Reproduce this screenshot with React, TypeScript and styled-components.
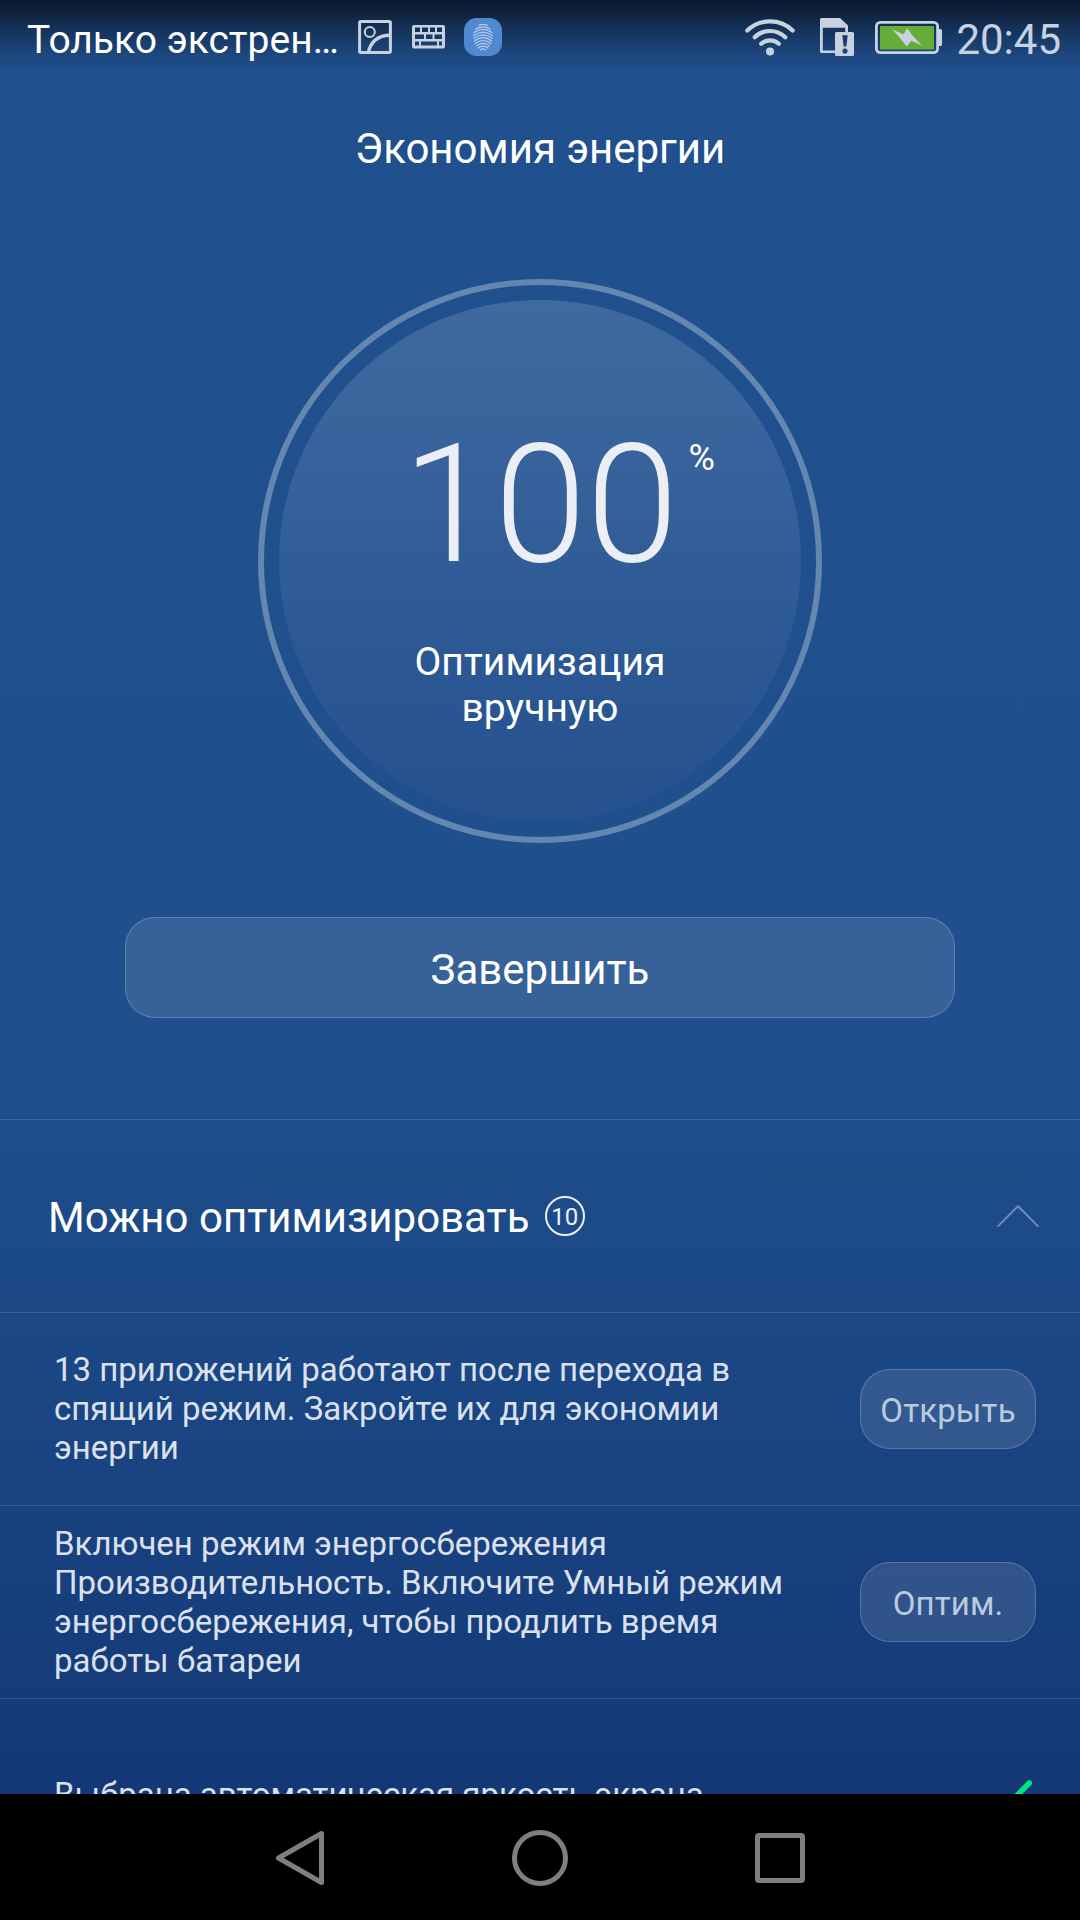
import React from 'react';
import styled, { createGlobalStyle } from 'styled-components';

const GlobalStyle = createGlobalStyle`
  * { box-sizing: border-box; }
  body { margin: 0; background: #000; }
  button { font: inherit; color: inherit; margin: 0; padding: 0; }
`;

const Screen = styled.div`
  width: 1080px;
  height: 1920px;
  display: flex;
  flex-direction: column;
  overflow: hidden;
  font-family: Roboto, 'Noto Sans', sans-serif;
  color: #fff;
`;

const Content = styled.main`
  height: 1794px;
  flex: none;
  display: flex;
  flex-direction: column;
  overflow: hidden;
  background:
    linear-gradient(180deg, rgba(10, 22, 40, 0.92) 0, rgba(10, 22, 40, 0.84) 10px, rgba(10, 22, 40, 0.5) 30px, rgba(10, 22, 40, 0.16) 54px, rgba(10, 22, 40, 0) 74px),
    linear-gradient(180deg, #20508e 0, #1f508d 1000px, #1e4e8b 1119px, #1c4886 1312px, #18407e 1560px, #143876 1794px);
`;

const StatusBar = styled.header`
  height: 75px;
  flex: none;
  display: flex;
  align-items: flex-start;
  padding: 0 19px 0 27px;
`;

const Carrier = styled.span`
  width: 331px;
  padding-top: 17px;
  font-size: 39px;
  line-height: 46px;
  white-space: nowrap;
`;

const StatusIcons = styled.div<{ $gap: number }>`
  display: flex;
  align-items: center;
  height: 74px;
  gap: ${(p) => p.$gap}px;
`;

const Spacer = styled.div`
  flex: 1;
`;

const Clock = styled.time`
  width: 105px;
  margin-left: 14px;
  padding-top: 16px;
  font-size: 42px;
  line-height: 48px;
  text-align: right;
  color: #c7d2e2;
  white-space: nowrap;
`;

const Title = styled.h1`
  margin: 49px 0 0;
  height: 50px;
  flex: none;
  font-size: 42px;
  font-weight: 400;
  line-height: 50px;
  text-align: center;
`;

const Ring = styled.section`
  width: 564px;
  height: 564px;
  flex: none;
  align-self: center;
  margin-top: 105px;
  padding: 15px;
  border: 6px solid rgba(255, 255, 255, 0.31);
  border-radius: 50%;
`;

const Disc = styled.div`
  width: 522px;
  height: 522px;
  display: flex;
  flex-direction: column;
  align-items: center;
  padding-top: 107px;
  border-radius: 50%;
  background: linear-gradient(180deg, #40699f 0%, #345f99 42%, #2d5a95 60%, #25528f 100%);
`;

const Reading = styled.div`
  height: 195px;
  display: flex;
  align-items: flex-start;
  padding-left: 37px;
`;

const Percent = styled.span`
  font-size: 166px;
  font-weight: 300;
  line-height: 195px;
  color: rgba(255, 255, 255, 0.9);
`;

const Unit = styled.sup`
  margin: 29px 0 0 10px;
  font-size: 36px;
  line-height: 44px;
`;

const Mode = styled.p`
  width: 320px;
  margin: 37px 0 0;
  font-size: 39px;
  line-height: 46px;
  letter-spacing: 0.1px;
  text-align: center;
`;

const FinishButton = styled.button`
  width: 830px;
  height: 101px;
  flex: none;
  align-self: center;
  margin: 74px 0 101px;
  padding-top: 3px;
  border: 1px solid rgba(255, 255, 255, 0.2);
  border-radius: 30px;
  background: rgba(247, 240, 255, 0.11);
  font-size: 42px;
`;

const Section = styled.section`
  display: flex;
  flex-direction: column;
`;

const SectionHeader = styled.div`
  height: 193px;
  flex: none;
  display: flex;
  align-items: center;
  padding: 0 40px 0 48px;
  border-top: 1px solid rgba(255, 255, 255, 0.14);
`;

const SectionTitle = styled.h2`
  margin: 3px 0 0;
  font-size: 42px;
  font-weight: 400;
`;

const Count = styled.span`
  width: 40px;
  height: 40px;
  display: flex;
  align-items: center;
  justify-content: center;
  margin-left: 15px;
  padding-top: 1px;
  border: 2px solid #e9eef5;
  border-radius: 50%;
  font-size: 24px;
  color: #eef2f8;
`;

const Row = styled.div`
  height: 193px;
  flex: none;
  display: flex;
  align-items: center;
  padding: 0 44px 0 54px;
  border-top: 1px solid rgba(255, 255, 255, 0.14);
`;

const RowText = styled.p`
  width: 750px;
  margin: -1px 0 0;
  font-size: 33px;
  line-height: 39px;
  white-space: pre-line;
  color: #dbe1ec;
`;

const RowButton = styled.button`
  width: 176px;
  height: 80px;
  flex: none;
  border: 1px solid rgba(255, 255, 255, 0.2);
  border-radius: 30px;
  background: rgba(255, 250, 255, 0.11);
  font-size: 33px;
  letter-spacing: 0.15px;
  padding-top: 3px;
  color: #bccadd;
`;

const NavBar = styled.nav`
  height: 126px;
  flex: none;
  display: flex;
  align-items: center;
  justify-content: center;
  gap: 180px;
  background: #000;
`;

const NavButton = styled.button`
  width: 60px;
  height: 60px;
  border: 0;
  background: none;
  svg { display: block; }
`;

const ICON = '#c7d1df';

const PictureIcon = () => (
  <svg width="34" height="34" viewBox="0 0 34 34" fill="none" stroke={ICON}>
    <rect x="1.6" y="1.6" width="30.8" height="30.8" rx="1.2" strokeWidth="3" />
    <circle cx="11.8" cy="12" r="5" strokeWidth="2" />
    <path d="M10.5 32C12.5 22 20 15.2 32 15.2" strokeWidth="3.4" />
  </svg>
);

const KeyboardIcon = () => (
  <svg width="34" height="24" viewBox="-1 0 34 24">
    <path
      fill={ICON}
      fillRule="evenodd"
      d="M2 0H31Q33 0 33 2V21.500Q33 23.500 31 23.500H2Q0 23.500 0 21.500V2Q0 0 2 0Z
         M3 2.600V7H8V2.600Z M10 2.600V7H16V2.600Z M18 2.600V7H23V2.600Z M25 2.600V7H30V2.600Z
         M3 9.500V14H12V9.500Z M14 9.500V14H20.500V9.500Z M22.500 9.500V14H30V9.500Z
         M3 16.500V20.500H7V16.500Z M9 16.500V20.500H25V16.500Z M27 16.500V20.500H30V16.500Z"
    />
  </svg>
);

const FingerprintIcon = () => (
  <svg width="38" height="38" viewBox="0 0 38 38" fill="none">
    <rect width="38" height="38" rx="12.500" fill="#5088d2" />
    <g stroke="#b9cdea" strokeWidth="1.200" strokeLinecap="round">
      <path d="M14.500 7.200Q19 5.600 23.500 7.200" />
      <path d="M11.500 11.200Q19 6.600 26.500 11.200" />
      <path d="M10 14.600Q19 8.200 28 14.600" />
      <path d="M9.600 17.600Q19 10.600 28.400 17.600" />
      <path d="M9.700 20.400Q19 13.400 28.300 20.400" />
      <path d="M10.400 23Q19 16.400 27.600 23" />
      <path d="M11.400 25.500Q19 19.500 26.600 25.500" />
      <path d="M12.600 27.900Q19 22.900 25.400 27.900" />
      <path d="M14 30Q19 26.200 24 30" />
      <path d="M16.500 31.800Q19 30 21.500 31.800" />
    </g>
  </svg>
);

const WifiIcon = () => (
  <svg width="50" height="38" viewBox="0 0 50 38" fill="none" stroke={ICON} strokeWidth="4.200" strokeLinecap="round">
    <path d="M2.300 12.600C14.500 0.300 35.500 0.300 47.700 12.600" />
    <path d="M9.700 19.300C18 10.900 32 10.900 40.300 19.300" />
    <path d="M16.200 25.800C21 21.200 29 21.200 33.800 25.800" />
    <circle cx="25" cy="33.500" r="4" fill={ICON} stroke="none" />
  </svg>
);

const SimAlertIcon = () => (
  <svg width="36" height="38" viewBox="-3 0 36 38" overflow="visible">
    <path
      fill={ICON}
      fillRule="evenodd"
      d="M1.500 0H20L28 7.500V14H25.200V9.800H2.800V32.500H15.200V35H1.500Q0 35 0 33.500V1.500Q0 0 1.500 0Z"
    />
    <path
      fill={ICON}
      fillRule="evenodd"
      d="M16.500 14H32.500Q34 14 34 15.500V36.500Q34 38 32.500 38H16.500Q15 38 15 36.500V15.500Q15 14 16.500 14Z
         M22.300 17.300L23.600 28.600H26.400L27.700 17.300Z M25 30.500A2.600 2.600 0 1 0 25.010 30.500Z"
    />
  </svg>
);

const BatteryIcon = () => (
  <svg width="67" height="33" viewBox="0 0 67 33">
    <rect x="1.400" y="1.400" width="61.200" height="30.200" rx="4" fill="none" stroke={ICON} strokeWidth="2.800" />
    <path d="M63.500 8H65.500Q67 8 67 9.500V23.500Q67 25 65.500 25H63.500Z" fill={ICON} />
    <rect x="5" y="5" width="54" height="23.500" fill="#66ac38" />
    <path d="M17 8L28.300 13.400L32 7.300L39.200 16.600L47.500 24.800L36.200 19.800L31.700 25.500L24.800 16.800Z" fill={ICON} />
  </svg>
);

const ChevronIcon = () => (
  <svg width="44" height="26" viewBox="0 0 44 26" fill="none" stroke="#6f8db9" strokeWidth="2">
    <path d="M1.600 23.600L22 3.200L42.400 23.600" />
  </svg>
);

const CheckIcon = () => (
  <svg width="44" height="34" viewBox="0 0 44 34" fill="none" stroke="#00e583" strokeWidth="5.600" strokeLinecap="round" strokeLinejoin="round">
    <path d="M5.500 20.500L14 28.500L37.300 5" />
  </svg>
);

type Item = { text: string; action?: string };

const ITEMS: Item[] = [
  {
    text: '13 приложений работают после перехода в\nспящий режим. Закройте их для экономии\nэнергии',
    action: 'Открыть',
  },
  {
    text: 'Включен режим энергосбережения\nПроизводительность. Включите Умный режим\nэнергосбережения, чтобы продлить время\nработы батареи',
    action: 'Оптим.',
  },
  { text: 'Выбрана автоматическая яркость экрана' },
];

export default function App() {
  return (
    <Screen>
      <GlobalStyle />
      <Content>
        <StatusBar>
          <Carrier>Только экстрен…</Carrier>
          <StatusIcons $gap={19}>
            <PictureIcon />
            <KeyboardIcon />
            <FingerprintIcon />
          </StatusIcons>
          <Spacer />
          <StatusIcons $gap={22}>
            <WifiIcon />
            <SimAlertIcon />
            <BatteryIcon />
          </StatusIcons>
          <Clock>20:45</Clock>
        </StatusBar>
        <Title>Экономия энергии</Title>
        <Ring>
          <Disc>
            <Reading>
              <Percent>100</Percent>
              <Unit>%</Unit>
            </Reading>
            <Mode>Оптимизация вручную</Mode>
          </Disc>
        </Ring>
        <FinishButton>Завершить</FinishButton>
        <Section>
          <SectionHeader>
            <SectionTitle>Можно оптимизировать</SectionTitle>
            <Count>10</Count>
            <Spacer />
            <ChevronIcon />
          </SectionHeader>
          {ITEMS.map((item) => (
            <Row key={item.text}>
              <RowText>{item.text}</RowText>
              <Spacer />
              {item.action ? <RowButton>{item.action}</RowButton> : <CheckIcon />}
            </Row>
          ))}
        </Section>
      </Content>
      <NavBar>
        <NavButton aria-label="Назад">
          <svg width="60" height="60" viewBox="0 0 60 60" fill="none" stroke="#7f7f7f" strokeWidth="5" strokeLinejoin="round">
            <path d="M8.500 31L51.500 6.500V55.500Z" />
          </svg>
        </NavButton>
        <NavButton aria-label="Домой">
          <svg width="60" height="60" viewBox="0 0 60 60" fill="none" stroke="#7f7f7f" strokeWidth="5">
            <circle cx="30" cy="31" r="25.500" />
          </svg>
        </NavButton>
        <NavButton aria-label="Недавние">
          <svg width="60" height="60" viewBox="0 0 60 60" fill="none" stroke="#7f7f7f" strokeWidth="5">
            <rect x="7.500" y="8.500" width="45" height="45" rx="1.500" />
          </svg>
        </NavButton>
      </NavBar>
    </Screen>
  );
}
